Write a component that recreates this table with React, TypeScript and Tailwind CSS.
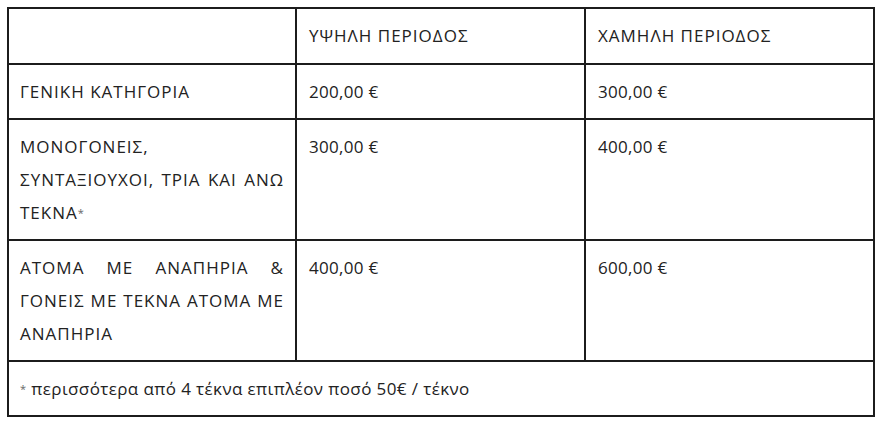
type Row = { lines: string[]; justify: boolean[]; star?: boolean; high: string; low: string }

const rows: Row[] = [
  { lines: ['ΓΕΝΙΚΗ ΚΑΤΗΓΟΡΙΑ'], justify: [false], high: '200,00 €', low: '300,00 €' },
  {
    lines: ['ΜΟΝΟΓΟΝΕΙΣ,', 'ΣΥΝΤΑΞΙΟΥΧΟΙ, ΤΡΙΑ ΚΑΙ ΑΝΩ', 'ΤΕΚΝΑ'],
    justify: [false, true, false],
    star: true,
    high: '300,00 €',
    low: '400,00 €',
  },
  {
    lines: ['ΑΤΟΜΑ ΜΕ ΑΝΑΠΗΡΙΑ &', 'ΓΟΝΕΙΣ ΜΕ ΤΕΚΝΑ ΑΤΟΜΑ ΜΕ', 'ΑΝΑΠΗΡΙΑ'],
    justify: [true, true, false],
    high: '400,00 €',
    low: '600,00 €',
  },
]

const cell = 'border-2 border-[#1c1c1c] px-[11px] py-[10px] align-top text-left font-normal'

export default function App() {
  return (
    <div className="min-h-screen bg-white pl-[7px] pt-[7px] text-[#222] text-[17px] leading-[33px] font-['Open_Sans',sans-serif]">
      <table className="w-[866px] table-fixed border-collapse">
        <colgroup>
          <col className="w-[288px]" />
          <col className="w-[289px]" />
          <col className="w-[289px]" />
        </colgroup>
        <thead>
          <tr className="tracking-[1px]">
            <th className={`${cell} h-[56px]`}></th>
            <th className={`${cell} pl-3`}>ΥΨΗΛΗ ΠΕΡΙΟΔΟΣ</th>
            <th className={`${cell} pl-3`}>ΧΑΜΗΛΗ ΠΕΡΙΟΔΟΣ</th>
          </tr>
        </thead>
        <tbody>
          {rows.map((r, i) => (
            <tr key={i}>
              <td className={`${cell} tracking-[1px]`}>
                {r.lines.map((line, j) => (
                  <div
                    key={j}
                    className={r.justify[j] ? 'whitespace-nowrap text-justify [text-align-last:justify]' : 'whitespace-nowrap'}
                  >
                    {line}
                    {r.star && j === r.lines.length - 1 && (
                      <span className="text-[11px] align-top text-[#666]">*</span>
                    )}
                  </div>
                ))}
              </td>
              <td className={`${cell} pl-3 tracking-[0.3px]`}>{r.high}</td>
              <td className={`${cell} pl-3 tracking-[0.3px]`}>{r.low}</td>
            </tr>
          ))}
          <tr>
            <td colSpan={3} className={`${cell} tracking-[0.4px]`}>
              <span className="text-[11px] align-top text-[#666]">*</span> περισσότερα από 4 τέκνα επιπλέον ποσό 50€ / τέκνο
            </td>
          </tr>
        </tbody>
      </table>
    </div>
  )
}
